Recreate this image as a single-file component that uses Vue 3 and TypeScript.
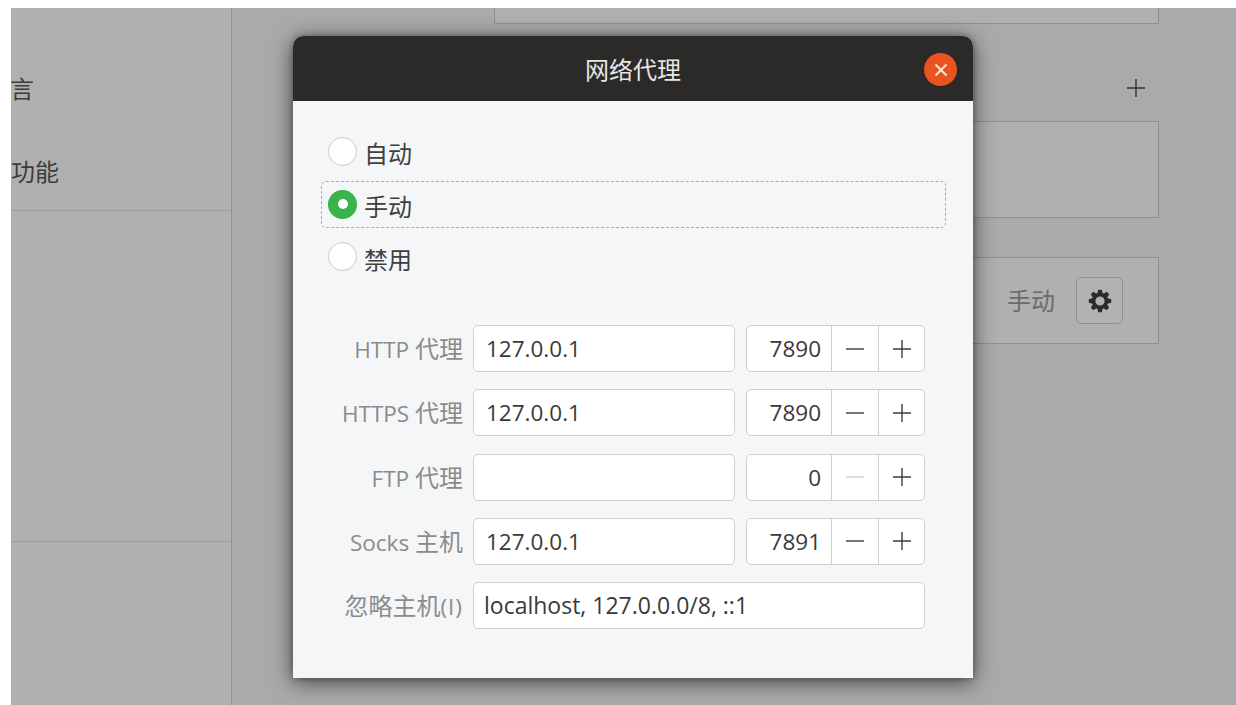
<script setup lang="ts">
interface ProxyRow {
  latin: string
  cjk: string
  host: string
  port: string
  minusOff?: boolean
}

const radios = [
  { text: '自动', on: false },
  { text: '手动', on: true },
  { text: '禁用', on: false },
]

const rows: ProxyRow[] = [
  { latin: 'HTTP ', cjk: '代理', host: '127.0.0.1', port: '7890' },
  { latin: 'HTTPS ', cjk: '代理', host: '127.0.0.1', port: '7890' },
  { latin: 'FTP ', cjk: '代理', host: '', port: '0', minusOff: true },
  { latin: 'Socks ', cjk: '主机', host: '127.0.0.1', port: '7891' },
]

const teeth = [0, 45, 90, 135]
</script>

<template>
  <div class="page">
    <div class="backdrop">
      <aside class="side">
        <div class="side-top">
          <div class="side-item">言</div>
          <div class="side-item">功能</div>
        </div>
        <div class="side-mid"></div>
      </aside>

      <main class="main">
        <div class="frame frame-a"></div>
        <div class="plus-row">
          <svg class="icon" width="20" height="20" viewBox="0 0 20 20">
            <path d="M10 1v18M1 10h18" stroke="#2e3033" stroke-width="1.4" fill="none" />
          </svg>
        </div>
        <div class="frame frame-b"></div>
        <div class="frame frame-c">
          <span class="frame-text">手动</span>
          <div class="gear-btn">
            <svg width="24" height="24" viewBox="0 0 24 24">
              <g fill="#2a2b2d">
                <path
                  v-for="a in teeth"
                  :key="a"
                  d="M10.2 0.8h3.6l1.2 5h-6zM10.2 23.2h3.6l1.2-5h-6z"
                  :transform="`rotate(${a} 12 12)`"
                />
              </g>
              <circle cx="12" cy="12" r="6.4" fill="none" stroke="#2a2b2d" stroke-width="3.6" />
            </svg>
          </div>
        </div>
      </main>

      <section class="dialog">
        <header class="titlebar">
          <span class="title">网络代理</span>
          <div class="close">
            <svg width="14" height="14" viewBox="0 0 14 14">
              <path d="M1.5 1.5l11 11M12.5 1.5l-11 11" stroke="#fbe6dc" stroke-width="2" fill="none" />
            </svg>
          </div>
        </header>

        <div class="body">
          <div class="radios">
            <div v-for="r in radios" :key="r.text" class="radio-row" :class="{ focus: r.on }">
              <span class="radio" :class="{ on: r.on }"></span>
              <span class="radio-text">{{ r.text }}</span>
            </div>
          </div>

          <div class="grid">
            <template v-for="row in rows" :key="row.latin">
              <div class="label"><span class="lat">{{ row.latin }}</span>{{ row.cjk }}</div>
              <div class="entry">{{ row.host }}</div>
              <div class="spin">
                <div class="spin-val">{{ row.port }}</div>
                <div class="spin-btn">
                  <svg width="20" height="20" viewBox="0 0 20 20">
                    <path d="M1 10h18" :stroke="row.minusOff ? '#cfd0d1' : '#3d3d3d'" stroke-width="1.4" fill="none" />
                  </svg>
                </div>
                <div class="spin-btn last">
                  <svg width="20" height="20" viewBox="0 0 20 20">
                    <path d="M10 1v18M1 10h18" stroke="#3d3d3d" stroke-width="1.4" fill="none" />
                  </svg>
                </div>
              </div>
            </template>
            <div class="label">忽略主机<span class="lat spaced">(I)</span></div>
            <div class="entry wide">localhost, 127.0.0.0/8, ::1</div>
          </div>
        </div>
      </section>
    </div>
  </div>
</template>

<style>
html, body {
  margin: 0;
  background: #ffffff;
}
</style>

<style scoped>
.page {
  box-sizing: border-box;
  width: 1236px;
  height: 705px;
  padding: 8px 0 0 11px;
  overflow: hidden;
  font-family: "Open Sans", "Noto Sans CJK SC", sans-serif;
}
.backdrop {
  position: relative;
  display: flex;
  height: 697px;
  background: #a9aaab;
}
.side {
  box-sizing: border-box;
  width: 221px;
  flex: none;
  background: #b0b0b0;
  border-right: 1px solid #8f9091;
}
.side-top {
  box-sizing: border-box;
  height: 203px;
  padding: 64px 0 0;
  display: flex;
  flex-direction: column;
  gap: 48px;
  border-bottom: 1px solid #9d9d9d;
}
.side-item {
  font-size: 24px;
  line-height: 34px;
  color: #3c3c3c;
}
.side-item:first-child {
  margin-left: -1px;
}
.side-item + .side-item {
  margin-top: 1px;
}
.side-mid {
  height: 330px;
  border-bottom: 1px solid #9d9d9d;
}
.main {
  flex: 1;
  padding: 0 77px 0 262px;
  min-width: 0;
}
.frame {
  box-sizing: border-box;
  background: #b0b0b0;
  border: 1px solid #8f9091;
}
.frame-a {
  height: 16px;
  border-top: none;
}
.plus-row {
  box-sizing: border-box;
  height: 97px;
  padding: 54px 13px 0 0;
  display: flex;
  justify-content: flex-end;
}
.icon {
  display: block;
}
.frame-b {
  height: 97px;
}
.frame-c {
  height: 87px;
  margin-top: 39px;
  padding-right: 35px;
  display: flex;
  align-items: center;
  justify-content: flex-end;
  gap: 21px;
}
.frame-text {
  font-size: 24px;
  line-height: 34px;
  color: #6a6b6c;
}
.gear-btn {
  box-sizing: border-box;
  width: 47px;
  height: 47px;
  display: flex;
  align-items: center;
  justify-content: center;
  border: 1px solid #8f9091;
  border-radius: 5px;
  background: #b2b2b2;
}
.dialog {
  position: absolute;
  left: 282px;
  top: 28px;
  width: 680px;
  height: 642px;
  background: #f5f6f7;
  border-radius: 10px 10px 0 0;
  box-shadow: 0 4px 22px rgba(0, 0, 0, 0.6), 0 0 6px rgba(0, 0, 0, 0.3);
}
.titlebar {
  position: relative;
  height: 65px;
  display: flex;
  align-items: center;
  justify-content: center;
  background: #2c2a29;
  border-radius: 10px 10px 0 0;
}
.title {
  font-size: 24px;
  color: #e8e6e3;
}
.close {
  position: absolute;
  right: 16px;
  top: 17px;
  width: 33px;
  height: 33px;
  border-radius: 50%;
  background: #e9531f;
  display: flex;
  align-items: center;
  justify-content: center;
}
.body {
  padding: 27px 27px 0 28px;
}
.radios {
  display: flex;
  flex-direction: column;
  gap: 5.5px;
}
.radio-row {
  box-sizing: border-box;
  height: 47px;
  padding: 0 0 0 6px;
  display: flex;
  align-items: center;
  gap: 7px;
  border: 1px dashed transparent;
  border-radius: 5px;
}
.radio-row.focus {
  border-color: #a9aaab;
}
.radio-row:last-child .radio-text {
  padding-top: 7px;
}
.radio {
  box-sizing: border-box;
  width: 29px;
  height: 29px;
  flex: none;
  border-radius: 50%;
  background: #ffffff;
  border: 1px solid #c9c9c9;
}
.radio.on {
  background: #38b44a;
  border: none;
  display: flex;
  align-items: center;
  justify-content: center;
}
.radio.on::after {
  content: "";
  width: 10px;
  height: 10px;
  border-radius: 50%;
  background: #ffffff;
}
.radio-text {
  font-size: 24px;
  line-height: 24px;
  padding-top: 5px;
  color: #3f3f3f;
}
.grid {
  margin-top: 45px;
  width: 604px;
  display: grid;
  grid-template-columns: 142px 262px 179px;
  column-gap: 10px;
  row-gap: 17.25px;
  align-items: center;
}
.label {
  height: 47px;
  overflow: hidden;
  font-size: 24px;
  line-height: 47px;
  color: #8a8b8c;
  text-align: right;
  white-space: pre;
}
.lat {
  font-size: 22.5px;
  line-height: 1;
}
.lat.spaced {
  letter-spacing: 1px;
}
.entry {
  box-sizing: border-box;
  height: 47px;
  padding: 0 12px;
  font-size: 22.5px;
  line-height: 45px;
  color: #3a3a3a;
  background: #ffffff;
  border: 1px solid #cfcfcf;
  border-radius: 5px;
}
.entry.wide {
  grid-column: 2 / 4;
  margin-right: -1px;
  padding-left: 10px;
  font-size: 23px;
  white-space: pre;
}
.spin {
  box-sizing: border-box;
  height: 47px;
  display: flex;
  background: #ffffff;
  border: 1px solid #cfcfcf;
  border-radius: 5px;
  margin-left: 1px;
  margin-right: -1px;
}
.spin-val {
  flex: 1;
  padding-right: 10px;
  font-size: 22.5px;
  line-height: 45px;
  text-align: right;
  color: #3a3a3a;
}
.spin-btn {
  box-sizing: border-box;
  width: 47px;
  flex: none;
  display: flex;
  align-items: center;
  justify-content: center;
  border-left: 1px solid #cfcfcf;
}
.spin-btn.last {
  width: 46px;
}
</style>
